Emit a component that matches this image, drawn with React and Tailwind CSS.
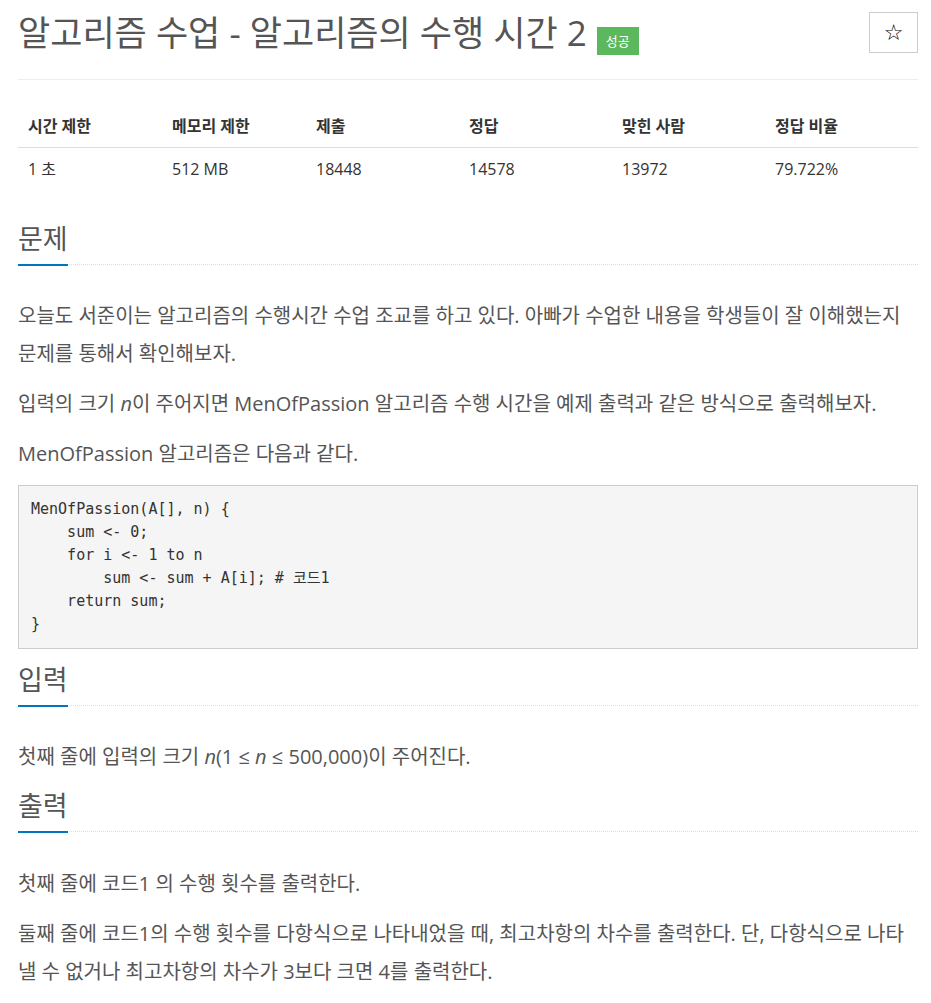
import React from 'react';

const stats = {
  headers: ['시간 제한', '메모리 제한', '제출', '정답', '맞힌 사람', '정답 비율'],
  values: ['1 초', '512 MB', '18448', '14578', '13972', '79.722%'],
};

const codeLines = [
  'MenOfPassion(A[], n) {',
  '    sum <- 0;',
  '    for i <- 1 to n',
  '        sum <- sum + A[i]; # 코드1',
  '    return sum;',
  '}',
];

const Headline = ({ children }) => (
  <div className="border-b border-dotted border-[#ddd]">
    <h2 className="inline-block text-[27px] leading-[36px] pb-[7px] -mb-[2px] border-b-2 border-[#0076c0] text-[#555]">
      {children}
    </h2>
  </div>
);

const Para = ({ children }) => (
  <p className="text-[20px] leading-[38px] mb-[12px]">{children}</p>
);

export default function App() {
  return (
    <div className="min-h-screen bg-white pl-[18px] font-['Open_Sans','Noto_Sans_CJK_KR',sans-serif] text-[#555]">
      <div className="w-[900px]">
        {/* Title */}
        <div className="flex justify-between items-start pt-[12px] pb-[26px] border-b border-[#eee]">
          <h1 className="flex items-end mt-[1px] text-[35px] leading-[40px] text-[#555]">
            <span>알고리즘 수업 - 알고리즘의 수행 시간 2</span>
            <span className="ml-[10px] -mb-[2px] px-[9px] h-[28px] flex items-center bg-[#5cb85c] text-white text-[13px] leading-none">
              성공
            </span>
          </h1>
          <button className="w-[49px] h-[41px] border border-[#ccc] bg-white flex items-center justify-center text-[22px] text-black font-['DejaVu_Sans',sans-serif]">
            ☆
          </button>
        </div>

        {/* Stats table */}
        <div className="mt-[24px] text-[16px] text-[#333]">
          <div className="grid grid-cols-[144px_144px_153px_153px_153px_153px] h-[44px] items-center border-b border-[#ddd] font-bold">
            {stats.headers.map((h) => (
              <div key={h} className="px-[10px]">{h}</div>
            ))}
          </div>
          <div className="grid grid-cols-[144px_144px_153px_153px_153px_153px] h-[42px] items-center">
            {stats.values.map((v) => (
              <div key={v} className="px-[10px]">{v}</div>
            ))}
          </div>
        </div>

        {/* 문제 */}
        <section className="mt-[31px]">
          <Headline>문제</Headline>
          <div className="pt-[32px]">
            <Para>
              오늘도 서준이는 알고리즘의 수행시간 수업 조교를 하고 있다. 아빠가 수업한 내용을 학생들이 잘 이해했는지 문제를 통해서 확인해보자.
            </Para>
            <Para>
              입력의 크기 <i>n</i>이 주어지면 MenOfPassion 알고리즘 수행 시간을 예제 출력과 같은 방식으로 출력해보자.
            </Para>
            <Para>MenOfPassion 알고리즘은 다음과 같다.</Para>
            <pre className="mb-[13px] bg-[#f5f5f5] border border-[#ccc] px-[12px] py-[12px] text-[15px] leading-[23px] text-[#333] font-['DejaVu_Sans_Mono','Noto_Sans_CJK_KR',monospace]">
              {codeLines.join('\n')}
            </pre>
          </div>
        </section>

        {/* 입력 */}
        <section className="mt-[7px]">
          <Headline>입력</Headline>
          <div className="pt-[32px]">
            <Para>
              첫째 줄에 입력의 크기 <i>n</i>(1 ≤ <i>n</i> ≤ 500,000)이 주어진다.
            </Para>
          </div>
        </section>

        {/* 출력 */}
        <section className="mt-[7px]">
          <Headline>출력</Headline>
          <div className="pt-[33px]">
            <Para>첫째 줄에 코드1 의 수행 횟수를 출력한다.</Para>
            <Para>
              둘째 줄에 코드1의 수행 횟수를 다항식으로 나타내었을 때, 최고차항의 차수를 출력한다. 단, 다항식으로 나타낼 수 없거나 최고차항의 차수가 3보다 크면 4를 출력한다.
            </Para>
          </div>
        </section>
      </div>
    </div>
  );
}
